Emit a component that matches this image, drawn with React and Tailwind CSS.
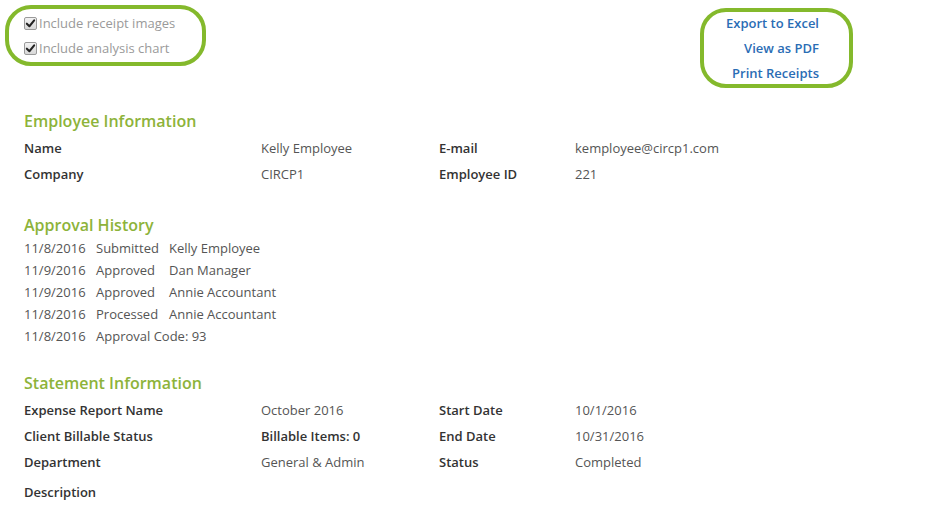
import React from 'react';

const font = { fontFamily: '"Open Sans", "Liberation Sans", sans-serif' };

function CheckMark() {
  return (
    <span className="inline-flex w-[13px] h-[13px] shrink-0 items-center justify-center rounded-[2px] border border-[#9a9a9a] bg-gradient-to-b from-[#f2f2f2] to-[#d8d8d8]">
      <svg viewBox="0 0 12 12" className="w-[11px] h-[11px]">
        <path d="M2 6.2 L4.8 9 L10 2.6" fill="none" stroke="#222" strokeWidth="2.2" strokeLinecap="round" strokeLinejoin="round" />
      </svg>
    </span>
  );
}

function Option({ label }) {
  return (
    <label className="flex items-center gap-[2px] h-[25px] text-[13px] text-[#9a9a9a]">
      <CheckMark />
      <span>{label}</span>
    </label>
  );
}

function Heading({ children }) {
  return (
    <h2 className="text-[16px] leading-[22px] font-semibold text-[#8db33a]">{children}</h2>
  );
}

function InfoRow({ cells }) {
  return (
    <div className="grid grid-cols-[237px_178px_136px_1fr] h-[26px] items-center text-[13px]">
      {cells.map((c, i) => (
        <span key={i} className={c.bold ? 'font-semibold text-[#333]' : 'text-[#555]'}>
          {c.text}
        </span>
      ))}
    </div>
  );
}

const history = [
  ['11/8/2016', 'Submitted', 'Kelly Employee'],
  ['11/9/2016', 'Approved', 'Dan Manager'],
  ['11/9/2016', 'Approved', 'Annie Accountant'],
  ['11/8/2016', 'Processed', 'Annie Accountant'],
];

const links = ['Export to Excel', 'View as PDF', 'Print Receipts'];

export default function App() {
  return (
    <div className="w-[941px] h-[512px] bg-white overflow-hidden" style={font}>
      <div className="flex justify-between pl-[5px] pr-[88px] pt-[5px]">
        <div className="w-[201px] h-[61px] border-[4px] border-[#84b92c] rounded-[26px] pl-[15px] pt-[2px]">
          <Option label="Include receipt images" />
          <Option label="Include analysis chart" />
        </div>
        <div className="mt-[3px] w-[153px] h-[80px] border-[4px] border-[#84b92c] rounded-[26px] pr-[30px] flex flex-col items-end">
          {links.map((l) => (
            <a key={l} className="h-[25px] shrink-0 leading-[22px] text-[13px] font-semibold text-[#2a6db5]">
              {l}
            </a>
          ))}
        </div>
      </div>

      <div className="pl-[24px] pt-[22px]">
        <Heading>Employee Information</Heading>
        <div className="mt-[4px]">
          <InfoRow
            cells={[
              { text: 'Name', bold: true },
              { text: 'Kelly Employee' },
              { text: 'E-mail', bold: true },
              { text: 'kemployee@circp1.com' },
            ]}
          />
          <InfoRow
            cells={[
              { text: 'Company', bold: true },
              { text: 'CIRCP1' },
              { text: 'Employee ID', bold: true },
              { text: '221' },
            ]}
          />
        </div>

        <div className="mt-[26px]">
          <Heading>Approval History</Heading>
          <div className="mt-[2px] text-[13px] text-[#555]">
            {history.map((h, i) => (
              <div key={i} className="grid grid-cols-[72px_73px_1fr] h-[22px] items-center">
                <span>{h[0]}</span>
                <span>{h[1]}</span>
                <span>{h[2]}</span>
              </div>
            ))}
            <div className="grid grid-cols-[72px_1fr] h-[22px] items-center">
              <span>11/8/2016</span>
              <span>Approval Code: 93</span>
            </div>
          </div>
        </div>

        <div className="mt-[24px]">
          <Heading>Statement Information</Heading>
          <div className="mt-[4px]">
            <InfoRow
              cells={[
                { text: 'Expense Report Name', bold: true },
                { text: 'October 2016' },
                { text: 'Start Date', bold: true },
                { text: '10/1/2016' },
              ]}
            />
            <InfoRow
              cells={[
                { text: 'Client Billable Status', bold: true },
                { text: 'Billable Items: 0', bold: true },
                { text: 'End Date', bold: true },
                { text: '10/31/2016' },
              ]}
            />
            <InfoRow
              cells={[
                { text: 'Department', bold: true },
                { text: 'General & Admin' },
                { text: 'Status', bold: true },
                { text: 'Completed' },
              ]}
            />
            <div className="mt-[4px] h-[26px] flex items-center text-[13px] font-semibold text-[#333]">
              Description
            </div>
          </div>
        </div>
      </div>
    </div>
  );
}
